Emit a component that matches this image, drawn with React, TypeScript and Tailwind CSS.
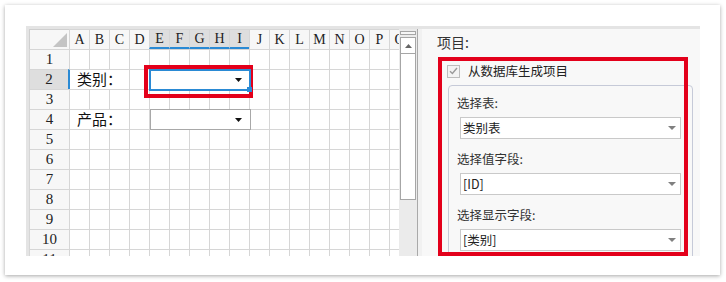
import React from "react";

const COLS = ["A","B","C","D","E","F","G","H","I","J","K","L","M","N","O","P","Q"];
const SERIF = { fontFamily: '"Liberation Serif", "DejaVu Serif", serif' };
const CJK = { fontFamily: '"Noto Sans CJK SC", "Noto Sans", sans-serif' };

function Cell({ w = "w-[20px]" }: { w?: string }) {
  return <div className={`${w} h-[20px] shrink-0 border-l border-t border-[#d6d6d6] bg-white`} />;
}

function Tri({ color = "#111" }: { color?: string }) {
  return (
    <svg width="7" height="4" viewBox="0 0 7 4">
      <polygon points="0,0 7,0 3.5,4" fill={color} />
    </svg>
  );
}

function HeaderRow() {
  return (
    <div className="flex h-[20px]">
      <div className="w-[40px] h-[20px] shrink-0 border-l border-t border-[#cfcfcf] bg-[#f7f7f7] flex items-end justify-end pr-[2px] pb-[2px]">
        <svg width="14" height="14" viewBox="0 0 14 14">
          <polygon points="14,0 14,14 0,14" fill="#c4c4c4" />
        </svg>
      </div>
      {COLS.map((c, i) => {
        const hl = i >= 4 && i <= 8;
        return (
          <div
            key={c}
            className={`w-[20px] h-[20px] shrink-0 border-l border-t border-[#d6d6d6] flex items-center justify-center text-[14px] text-[#222] ${
              hl ? "bg-[#dedede] border-b-2 border-b-[#2a8ad4]" : "bg-[#f7f7f7]"
            }`}
            style={SERIF}
          >
            {c}
          </div>
        );
      })}
    </div>
  );
}

function RowHead({ n, active = false }: { n: number; active?: boolean }) {
  return (
    <div
      className={`${active ? "w-[39px] bg-[#dedede]" : "w-[40px] bg-[#f7f7f7]"} h-[20px] shrink-0 border-l border-t border-[#d6d6d6] flex items-center justify-center text-[15px] text-[#222]`}
      style={SERIF}
    >
      {n}
    </div>
  );
}

function PlainRow({ n }: { n: number }) {
  return (
    <div className="flex h-[20px] shrink-0">
      <RowHead n={n} />
      {COLS.map((c) => (
        <Cell key={c} />
      ))}
    </div>
  );
}

function LabelRow({ n, label, active = false }: { n: number; label: string; active?: boolean }) {
  return (
    <div className="flex h-[20px] shrink-0">
      <RowHead n={n} active={active} />
      <div
        className={`${active ? "w-[61px] border-l-2 border-l-[#2a8ad4]" : "w-[60px] border-l"} h-[20px] shrink-0 border-t border-[#d6d6d6] bg-white flex items-center text-[15px] text-[#111] pl-[7px]`}
        style={CJK}
      >
        {label}
      </div>
      <Cell />
      <div className="relative w-[100px] h-[20px] shrink-0 border-l border-t border-[#d6d6d6] bg-white">
        {active ? (
          <>
            <div className="absolute left-[-6px] top-[-5px] w-[109px] h-[33px] border-4 border-[#e3001b]" />
            <div className="absolute left-[-1px] top-[-1px] w-[102px] h-[22px] border-2 border-[#2a8ad4] bg-white flex items-center justify-end pr-[7px]">
              <Tri />
            </div>
            <div className="absolute left-[97px] top-[17px] w-[5px] h-[5px] bg-[#2a8ad4]" />
          </>
        ) : (
          <div className="absolute left-0 top-[-1px] w-[101px] h-[21px] border border-[#a8a8a8] bg-white flex items-center justify-end pr-[8px]">
            <Tri />
          </div>
        )}
      </div>
      {COLS.slice(9).map((c) => (
        <Cell key={c} />
      ))}
    </div>
  );
}

function Sheet() {
  return (
    <div className="w-[370px] h-full overflow-hidden flex flex-col">
      <HeaderRow />
      <PlainRow n={1} />
      <LabelRow n={2} label="类别：" active />
      <PlainRow n={3} />
      <LabelRow n={4} label="产品：" />
      {[5, 6, 7, 8, 9, 10, 11].map((n) => (
        <PlainRow key={n} n={n} />
      ))}
    </div>
  );
}

function ScrollBar() {
  return (
    <div className="w-[19px] h-full shrink-0 bg-[#ebebeb] border-r border-[#a9a9a9] flex flex-col pl-px">
      <div className="mt-[2px] w-[16px] h-[4px] border border-[#a6a6a6] bg-[#f6f6f6]" />
      <div className="mt-[2px] w-[16px] h-[17px] border border-[#a6a6a6] bg-white flex items-center justify-center">
        <svg width="7" height="4" viewBox="0 0 7 4">
          <polygon points="0,4 7,4 3.5,0" fill="#666" />
        </svg>
      </div>
      <div className="w-[16px] h-[146px] border border-t-0 border-[#a6a6a6] bg-white" />
    </div>
  );
}

function Select({ value }: { value: string }) {
  return (
    <div className="ml-[3px] w-[221px] h-[22px] border border-[#c9c9c9] bg-white flex items-center justify-between pl-[2px] pr-[4px] text-[12.5px] text-[#222]">
      <span>{value}</span>
      <svg width="8" height="4" viewBox="0 0 8 4">
        <polygon points="0,0 8,0 4,4" fill="#808080" />
      </svg>
    </div>
  );
}

function Panel() {
  return (
    <div className="relative w-[278px] h-full overflow-hidden bg-[#f8f8f8] pl-[15px] pt-[3px]" style={CJK}>
      <div className="h-[20px] leading-[20px] text-[14px] text-[#333]">项目:</div>
      <div className="mt-[10px] ml-[10px] h-[18px] flex items-center gap-[8px]">
        <div className="w-[13px] h-[13px] border border-[#bdbdbd] bg-[#f3f3f3] flex items-center justify-center">
          <svg width="9" height="8" viewBox="0 0 9 8">
            <path d="M1 4.2 L3.4 6.5 L8 1" stroke="#9a9a9a" strokeWidth="1.4" fill="none" />
          </svg>
        </div>
        <span className="text-[12.5px] text-[#222]">从数据库生成项目</span>
      </div>
      <div className="mt-[5px] ml-[11px] w-[245px] h-[200px] rounded-[4px] border border-[#c6cad8] pt-[8px] pl-[8px]">
        <div className="h-[18px] leading-[18px] text-[12.5px] text-[#333]">选择表:</div>
        <div className="mt-[5px]">
          <Select value="类别表" />
        </div>
        <div className="mt-[11px] h-[18px] leading-[18px] text-[12.5px] text-[#333]">选择值字段:</div>
        <div className="mt-[5px]">
          <Select value="[ID]" />
        </div>
        <div className="mt-[11px] h-[18px] leading-[18px] text-[12.5px] text-[#333]">选择显示字段:</div>
        <div className="mt-[5px]">
          <Select value="[类别]" />
        </div>
      </div>
      <div className="absolute left-[16px] top-[28px] w-[250px] h-[199px] border-4 border-[#e3001b] pointer-events-none" />
    </div>
  );
}

export default function App() {
  return (
    <div className="w-[726px] h-[282px] bg-white pt-[5px] pl-[5px]">
      <div className="w-[715px] h-[270px] bg-white shadow-[0_1px_4px_rgba(0,0,0,0.35)] pt-[21px] pl-[21px]">
        <div className="w-[674px] h-[230px] flex border-t-[3px] border-[#e4e4e4]">
          <div className="h-full flex border-l-[3px] border-[#e4e4e4]">
            <Sheet />
            <ScrollBar />
          </div>
          <div className="w-[4px] h-full bg-[#f1f1f1]" />
          <Panel />
        </div>
      </div>
    </div>
  );
}
